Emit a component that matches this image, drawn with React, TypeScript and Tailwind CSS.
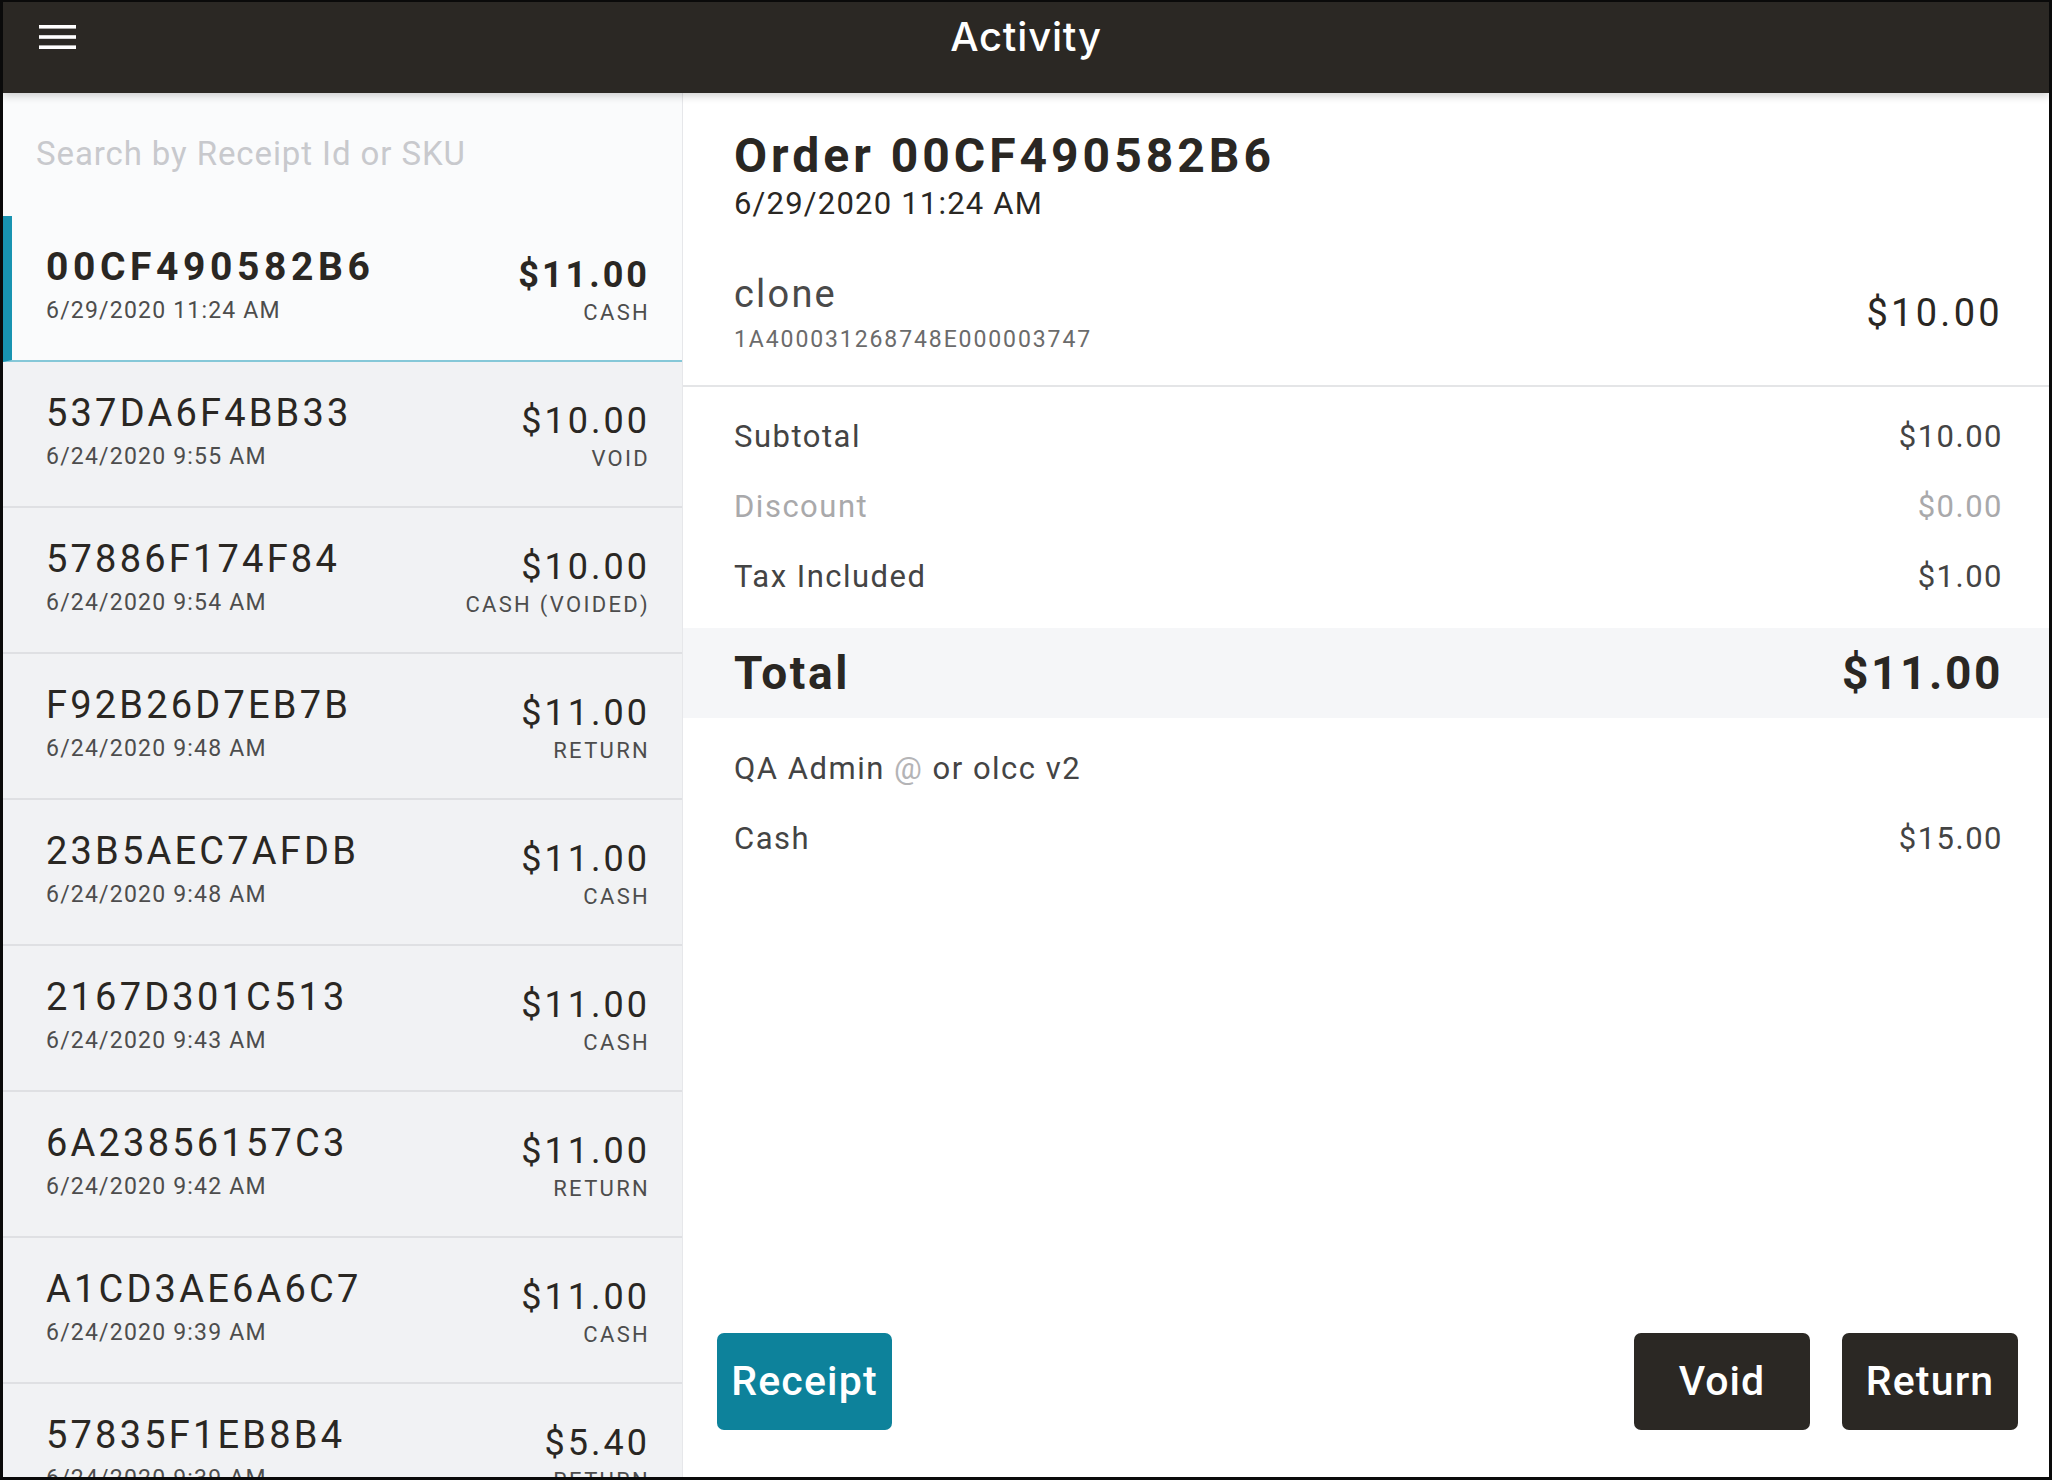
type Txn = {
  id: string;
  date: string;
  amount: string;
  tender: string;
};

const txns: Txn[] = [
  { id: "00CF490582B6", date: "6/29/2020 11:24 AM", amount: "$11.00", tender: "CASH" },
  { id: "537DA6F4BB33", date: "6/24/2020 9:55 AM", amount: "$10.00", tender: "VOID" },
  { id: "57886F174F84", date: "6/24/2020 9:54 AM", amount: "$10.00", tender: "CASH (VOIDED)" },
  { id: "F92B26D7EB7B", date: "6/24/2020 9:48 AM", amount: "$11.00", tender: "RETURN" },
  { id: "23B5AEC7AFDB", date: "6/24/2020 9:48 AM", amount: "$11.00", tender: "CASH" },
  { id: "2167D301C513", date: "6/24/2020 9:43 AM", amount: "$11.00", tender: "CASH" },
  { id: "6A23856157C3", date: "6/24/2020 9:42 AM", amount: "$11.00", tender: "RETURN" },
  { id: "A1CD3AE6A6C7", date: "6/24/2020 9:39 AM", amount: "$11.00", tender: "CASH" },
  { id: "57835F1EB8B4", date: "6/24/2020 9:39 AM", amount: "$5.40", tender: "RETURN" },
];

function TxnRow({ txn, selected }: { txn: Txn; selected: boolean }) {
  return (
    <div
      className={[
        "flex h-[146px] shrink-0 items-start justify-between border-b-2 pr-[32px] pt-[29px]",
        selected
          ? "border-l-[9px] border-b-[#86c8d8] border-l-[#1893b1] bg-[#fafbfc] pl-[34px]"
          : "border-b-[#dfe0e3] bg-[#f1f2f4] pl-[43px]",
      ].join(" ")}
    >
      <div>
        <div
          className={[
            "text-[38px] leading-[44px] text-[#2a2723]",
            selected ? "text-[39px] font-bold tracking-[4.6px]" : "tracking-[3.2px]",
          ].join(" ")}
        >
          {txn.id}
        </div>
        <div className="mt-[8px] text-[23px] leading-[28px] tracking-[1.2px] text-[#4d4d4d]">
          {txn.date}
        </div>
      </div>
      <div className="mt-[9px] text-right">
        <div
          className={[
            "text-[36px] leading-[42px] tracking-[3px] text-[#2a2723]",
            selected ? "font-bold" : "",
          ].join(" ")}
        >
          {txn.amount}
        </div>
        <div className="mt-[3px] text-[22px] leading-[28px] tracking-[2.3px] text-[#4d4d4d]">
          {txn.tender}
        </div>
      </div>
    </div>
  );
}

function SummaryRow({ label, value, muted }: { label: React.ReactNode; value?: string; muted?: boolean }) {
  return (
    <div
      className={[
        "flex h-[70px] items-center justify-between pl-[51px] pr-[46px] text-[31px] leading-[36px] tracking-[1.5px]",
        muted ? "text-[#a9a9ab]" : "text-[#444444]",
      ].join(" ")}
    >
      <div>{label}</div>
      {value && <div>{value}</div>}
    </div>
  );
}

function MenuIcon() {
  return (
    <svg width="37" height="24" viewBox="0 0 37 24" fill="white" aria-hidden>
      <rect x="0" y="0" width="37" height="3.6" />
      <rect x="0" y="10.2" width="37" height="3.6" />
      <rect x="0" y="20.4" width="37" height="3.6" />
    </svg>
  );
}

export default function App() {
  return (
    <div
      className="flex h-[1480px] w-[2052px] flex-col overflow-hidden border-[3px] border-t-2 border-[#0a0a0a] bg-white"
      style={{ fontFamily: "Roboto, 'Liberation Sans', sans-serif" }}
    >
      {/* top bar */}
      <header className="relative z-10 grid h-[91px] shrink-0 grid-cols-[1fr_auto_1fr] items-start bg-[#2b2824] pt-[11px] shadow-[0_3px_8px_rgba(0,0,0,0.18)]">
        <div className="flex h-[48px] items-center pl-[36px]">
          <MenuIcon />
        </div>
        <h1
          className="h-[48px] text-[40px] font-medium leading-[48px] tracking-[0.8px] text-white"
          style={{ fontFamily: "Inter, 'Noto Sans', sans-serif" }}
        >
          Activity
        </h1>
        <div />
      </header>

      <div className="flex min-h-0 flex-1">
        {/* receipts list */}
        <aside className="flex w-[680px] shrink-0 flex-col overflow-hidden border-r border-[#e6e7ea] bg-[#f1f2f4]">
          <div className="h-[123px] shrink-0 bg-[#fafbfc] px-[33px] pt-[42px]">
            <input
              placeholder="Search by Receipt Id or SKU"
              className="h-[38px] w-full bg-transparent text-[33px] leading-[38px] tracking-[0.9px] text-[#2a2723] outline-none placeholder:text-[#c8c9cd]"
            />
          </div>
          {txns.map((t, i) => (
            <TxnRow key={t.id} txn={t} selected={i === 0} />
          ))}
        </aside>

        {/* order detail */}
        <main className="flex min-w-0 flex-1 flex-col">
          <div className="px-[51px] pt-[35px]">
            <h2 className="text-[48px] font-bold leading-[56px] tracking-[4px] text-[#2a2723]">
              Order 00CF490582B6
            </h2>
            <div className="mt-[2px] text-[31px] leading-[36px] tracking-[1.2px] text-[#2a2723]">
              6/29/2020 11:24 AM
            </div>
          </div>

          <div className="mt-[50px] flex items-center justify-between border-b-2 border-[#e4e5e7] pb-[31px] pl-[51px] pr-[46px]">
            <div>
              <div className="text-[38px] leading-[44px] tracking-[2.2px] text-[#4a4a4a]">clone</div>
              <div className="mt-[10px] text-[23px] leading-[28px] tracking-[1.9px] text-[#6b6b6b]">
                1A400031268748E000003747
              </div>
            </div>
            <div className="text-[38px] leading-[44px] tracking-[3.3px] text-[#2a2723]">$10.00</div>
          </div>

          <div className="pt-[15px]">
            <SummaryRow label="Subtotal" value="$10.00" />
            <SummaryRow label="Discount" value="$0.00" muted />
            <SummaryRow label="Tax Included" value="$1.00" />
          </div>

          <div className="mt-[16px] flex h-[90px] items-center justify-between bg-[#f5f6f8] pl-[51px] pr-[46px] text-[46px] font-bold leading-[54px] text-[#2a2723]">
            <div className="tracking-[2.6px]">Total</div>
            <div className="tracking-[2.6px]">$11.00</div>
          </div>

          <div className="mt-[16px]">
            <SummaryRow
              label={
                <>
                  QA Admin <span className="text-[#b4b4b6]">@</span> or olcc v2
                </>
              }
            />
            <SummaryRow label="Cash" value="$15.00" />
          </div>

          <div className="mt-auto flex items-center pb-[47px] pl-[34px] pr-[31px]">
            <button className="h-[97px] w-[175px] rounded-[7px] bg-[#0d829b] text-[41px] font-medium tracking-[1.2px] text-white">
              Receipt
            </button>
            <div className="flex-1" />
            <div className="flex gap-[32px]">
              <button className="h-[97px] w-[176px] rounded-[7px] bg-[#2b2824] text-[41px] font-medium tracking-[1px] text-white">
                Void
              </button>
              <button className="h-[97px] w-[176px] rounded-[7px] bg-[#2b2824] text-[41px] font-medium tracking-[1.2px] text-white">
                Return
              </button>
            </div>
          </div>
        </main>
      </div>
    </div>
  );
}
